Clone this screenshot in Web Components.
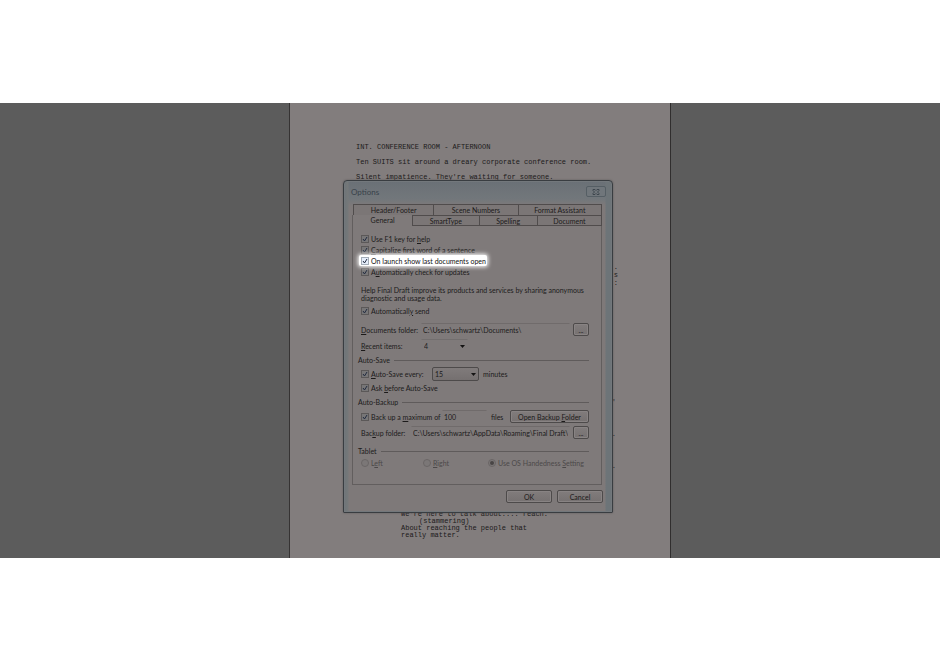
<!DOCTYPE html>
<html lang="en">
<head>
<meta charset="utf-8">
<title>Options</title>
<style>
  body {
    margin: 0;
    padding-top: 103px;
    background: #fff;
    color: #1c1a1a;
    font: 7px/8px Lato, "Liberation Sans", sans-serif;
  }
</style>
</head>
<body>
<draft-desk>
  <script-page>
    <script-line>INT. CONFERENCE ROOM - AFTERNOON</script-line>
    <script-line>Ten SUITS sit around a dreary corporate conference room.</script-line>
    <script-line>Silent impatience. They're waiting for someone.</script-line>
    <script-line slot="speech">We're here to talk about.... reach.</script-line>
    <script-line slot="speech" paren>(stammering)</script-line>
    <script-line slot="speech">About reaching the people that</script-line>
    <script-line slot="speech">really matter.</script-line>
  </script-page>
  <options-dialog slot="dialog"></options-dialog>
</draft-desk>

<script>
  // small helper, every element gets an open shadow root with its own markup
  class BaseElement extends HTMLElement {
    constructor() {
      super();
      this.attachShadow({ mode: 'open' });
    }
    render(html) {
      this.shadowRoot.innerHTML = html;
    }
  }

  class DraftDesk extends BaseElement {
    connectedCallback() {
      this.render(`
        <style>
          :host {
            display: grid;
            grid-template-columns: 289fr 382fr 269fr;
            background: #5c5c5c;
          }
          .paper {
            grid-column: 2;
            position: relative;
            background: #827d7d;
            border-left: 1px solid #353333;
            border-right: 1px solid #302e2e;
          }
          /* the dialog floats over the page */
          .float {
            position: absolute;
            top: 77px;
            left: 53px;
            right: 57px;
          }
        </style>
        <div class="paper">
          <slot></slot>
          <div class="float"><slot name="dialog"></slot></div>
        </div>
      `);
    }
  }

  class ScriptPage extends BaseElement {
    connectedCallback() {
      this.render(`
        <style>
          :host {
            display: block;
            padding: 40px 52px 19px 66px;
            font: 7px/8px "Liberation Mono", "Courier New", monospace;
          }
          .action {
            display: flex;
            flex-direction: column;
            gap: 7px;
          }
          /* line ends that stick out to the right of the dialog */
          .edge {
            display: flex;
            flex-direction: column;
            align-items: flex-end;
            margin-top: 82px;
          }
          .edge.sparse {
            gap: 24px;
            margin: 111px 2px 41px 0;
          }
          .speech {
            padding-left: 45px;
            line-height: 7px;
          }
        </style>
        <div class="action"><slot></slot></div>
        <div class="edge"><span>.</span><span>s</span><span>:</span></div>
        <div class="edge sparse"><span>'</span><span>.</span><span>.</span></div>
        <div class="speech"><slot name="speech"></slot></div>
      `);
    }
  }

  class ScriptLine extends BaseElement {
    connectedCallback() {
      this.render(`
        <style>
          :host { display: block; white-space: nowrap; }
          :host([paren]) { padding-left: 18px; }
        </style>
        <slot></slot>
      `);
    }
  }

  class CheckOption extends BaseElement {
    connectedCallback() {
      const type = this.getAttribute('type') || 'checkbox';
      this.render(`
        <style>
          :host { display: flex; }
          label {
            display: flex;
            align-items: center;
            gap: 2px;
            height: 11px;
            white-space: nowrap;
          }
          .box { position: relative; display: flex; }
          input {
            appearance: none;
            box-sizing: border-box;
            width: 8px;
            height: 8px;
            margin: 0;
            border: 1px solid #5b5858;
            background: #777677;
          }
          input[type=radio] { border-radius: 50%; border-color: #6a6666; background: #7b7777; }
          svg { position: absolute; inset: 0; width: 8px; height: 8px; pointer-events: none; display: none; }
          input:checked + svg { display: block; }
          :host([disabled]) { color: #4c4949; }
          /* spotlight over the row the tip talks about */
          :host([spotlight]) label {
            color: #111;
            background: #fff;
            border-radius: 2px;
            margin: 0 0 0 -2px;
            padding: 0 1px 0 2px;
            box-shadow: 0 0 4px 1px #fff;
            position: relative;
            z-index: 1;
          }
          :host([spotlight]) input { border-color: #a3adb8; background: #e6eefb; }
        </style>
        <label>
          <span class="box">
            <input type="${type}" name="${this.getAttribute('name') || ''}"
              ${this.hasAttribute('checked') ? 'checked' : ''}
              ${this.hasAttribute('disabled') ? 'disabled' : ''}>
            ${type === 'radio'
              ? '<svg viewBox="0 0 8 8"><circle cx="4" cy="4" r="2" fill="#484545"/></svg>'
              : '<svg viewBox="0 0 8 8"><path d="M2 4l1.5 2L6 2" fill="none" stroke="#222b40"/></svg>'}
          </span>
          <span><slot></slot></span>
        </label>
      `);
    }
  }

  class GroupTitle extends BaseElement {
    connectedCallback() {
      this.render(`
        <style>
          :host { display: flex; align-items: center; gap: 4px; height: 8px; }
          i { flex: 1; height: 1px; background: #5f5b5b; }
        </style>
        <slot></slot><i></i>
      `);
    }
  }

  class PushButton extends BaseElement {
    connectedCallback() {
      this.render(`
        <style>
          :host { display: flex; }
          button {
            flex: 1;
            box-sizing: border-box;
            height: 13px;
            padding: 0;
            border: 1px solid #4d4a4a;
            border-radius: 2px;
            background: linear-gradient(#817c7c, #767171);
            box-shadow: inset 0 0 0 1px #888383;
            color: inherit;
            font: inherit;
            white-space: nowrap;
          }
        </style>
        <button type="button"><slot></slot></button>
      `);
    }
  }

  // the slotted text becomes the label, or pass label="" when there is none to show
  class DropDown extends BaseElement {
    connectedCallback() {
      const label = this.getAttribute('label');
      this.render(`
        <style>
          :host { display: flex; align-items: center; }
          label { width: 60px; white-space: nowrap; }
          .field { position: relative; display: flex; width: 47px; }
          select {
            appearance: none;
            box-sizing: border-box;
            width: 100%;
            height: 13px;
            margin: 0;
            padding: 0 0 0 2px;
            border: 1px solid transparent;
            border-top-color: #726e6e;
            border-radius: 0;
            background: transparent;
            color: inherit;
            font: inherit;
          }
          :host([raised]) select {
            height: 14px;
            border: 1px solid #4d4a4a;
            border-radius: 2px;
            background: linear-gradient(#807b7b, #757070);
          }
          svg { position: absolute; right: 3px; top: 6px; width: 5px; height: 3px; pointer-events: none; }
        </style>
        ${label ? '' : '<label for="list"><slot></slot></label>'}
        <div class="field">
          <select id="list" ${label ? `aria-label="${label}"` : ''}>
            <option>${this.getAttribute('value')}</option>
          </select>
          <svg viewBox="0 0 5 3"><path d="M0 0h5L2.5 3z" fill="#141313"/></svg>
        </div>
      `);
    }
  }

  class OptionsDialog extends BaseElement {
    connectedCallback() {
      this.render(`
        <style>
          :host {
            display: block;
            box-sizing: border-box;
            padding: 0 10px 9px 8px;
            border: 1px solid #393d41;
            border-radius: 4px 4px 1px 1px;
            background: linear-gradient(90deg, #6d7478 0, #757879 4px, transparent 5px, transparent calc(100% - 7px), #6d7478 calc(100% - 6px)),
              linear-gradient(#6a7076, #72777b 18px, #7e7979 25px);
            box-shadow: inset 0 0 0 1px #73787c, 0 0 2px #5e5a5a;
          }
          header {
            display: flex;
            align-items: center;
            justify-content: space-between;
            height: 21px;
            margin: 0 -4px 2px -1px;
            color: #38424a;
          }
          h1 { margin: 0; font: inherit; font-size: 8px; }
          .close {
            display: flex;
            align-items: center;
            justify-content: center;
            box-sizing: border-box;
            width: 20px;
            height: 11px;
            padding: 0;
            border: 1px solid #555e64;
            border-radius: 2px;
            background: #70767b;
          }
          .close svg { width: 8px; height: 6px; }
          nav { display: grid; }
          nav.back { grid-template-columns: 80fr 84fr 84fr; margin-left: 1px; }
          nav.front { grid-template-columns: 60fr 66fr 58fr 65fr; }
          nav button {
            height: 11px;
            box-sizing: border-box;
            margin: 0;
            padding: 0;
            border: 1px solid #504c4c;
            border-width: 1px 0 0 1px;
            background: #7b7676;
            color: inherit;
            font: inherit;
          }
          nav button:last-child { border-right-width: 1px; }
          nav.front button { border-bottom-width: 1px; }
          nav.front .active { padding-bottom: 2px; border-bottom: 0; border-top: 0; border-color: #625e5e; background: #7f7a7a; }
          .panel {
            padding: 7px 12px 16px 8px;
            border: 1px solid #625e5e;
            border-top: 0;
            background: #7f7a7a;
          }
          p { margin: 9px 0 3px; white-space: nowrap; }
          .row { display: flex; align-items: center; }
          .row label { white-space: nowrap; }
          input {
            box-sizing: border-box;
            flex: 1;
            min-width: 0;
            height: 13px;
            padding: 0 1px;
            border: 1px solid transparent;
            border-top-color: #706b6b;
            background: transparent;
            color: inherit;
            font: inherit;
          }
          group-title { margin-left: -3px; }
          .docs { height: 15px; margin-top: 6px; }
          .docs label { width: 60px; }
          .recent { height: 13px; margin: 2px 0 4px; }
          .save { height: 15px; margin: 2px 0 1px; }
          .save check-option { width: 71px; }
          .save drop-down { margin-right: 4px; }
          .backup-title { margin-top: 5px; }
          .backup { height: 15px; margin-top: 3px; }
          .backup check-option { width: 81px; }
          .backup input { flex: 0 0 45px; }
          .backup span { margin: 0 auto 0 4px; }
          .backup push-button { width: 79px; }
          .folder { height: 13px; margin: 2px 0 8px; }
          .folder label { width: 50px; }
          .browse { width: 16px; margin-left: 3px; }
          .hands { margin-top: 2px; display: grid; grid-template-columns: 62px 65px auto; }
          footer { display: flex; justify-content: flex-end; gap: 5px; margin: 5px -1px 0 0; }
          footer push-button { width: 46px; }
        </style>
        <header>
          <h1>Options</h1>
          <button class="close" aria-label="Close">
            <svg viewBox="0 0 8 6"><path d="M1 .5h2l1 1 1-1h2v1L5.500 3 7 4.500v1H5l-1-1-1 1H1v-1L2.500 3 1 1.500z" fill="none" stroke="#3d464d"/></svg>
          </button>
        </header>
        <nav class="back">
          <button>Header/Footer</button><button>Scene Numbers</button><button>Format Assistant</button>
        </nav>
        <nav class="front">
          <button class="active">General</button><button>SmartType</button><button>Spelling</button><button>Document</button>
        </nav>
        <div class="panel">
          <check-option checked>Use F1 key for <u>h</u>elp</check-option>
          <check-option checked><u>C</u>apitalize first word of a sentence</check-option>
          <check-option checked spotlight>On launch show last documents open</check-option>
          <check-option checked>A<u>u</u>tomatically check for updates</check-option>
          <p>Help Final Draft improve its products and services by sharing anonymous<br>diagnostic and usage data.</p>
          <check-option checked>Automaticall<u>y</u> send</check-option>
          <div class="row docs">
            <label for="docs"><u>D</u>ocuments folder:</label>
            <input id="docs" value="C:\\Users\\schwartz\\Documents\\">
            <push-button class="browse">...</push-button>
          </div>
          <drop-down class="recent" value="4"><u>R</u>ecent items:</drop-down>
          <group-title>Auto-Save</group-title>
          <div class="row save">
            <check-option checked><u>A</u>uto-Save every:</check-option>
            <drop-down raised label="Auto-Save minutes" value="15"></drop-down>
            <span>minutes</span>
          </div>
          <check-option checked>Ask <u>b</u>efore Auto-Save</check-option>
          <group-title class="backup-title">Auto-Backup</group-title>
          <div class="row backup">
            <check-option checked>Back up a <u>m</u>aximum of</check-option>
            <input aria-label="Maximum backup files" value="100">
            <span>files</span>
            <push-button>Open Backup <u>F</u>older</push-button>
          </div>
          <div class="row folder">
            <label for="folder">Bac<u>k</u>up folder:</label>
            <input id="folder" value="C:\\Users\\schwartz\\AppData\\Roaming\\Final Draft\\Fi">
            <push-button class="browse">...</push-button>
          </div>
          <group-title>Tablet</group-title>
          <div class="hands">
            <check-option type="radio" name="hand" disabled>L<u>e</u>ft</check-option>
            <check-option type="radio" name="hand" disabled><u>R</u>ight</check-option>
            <check-option type="radio" name="hand" disabled checked>Use OS Handedness <u>S</u>etting</check-option>
          </div>
        </div>
        <footer>
          <push-button>OK</push-button>
          <push-button>Cancel</push-button>
        </footer>
      `);
    }
  }

  customElements.define('draft-desk', DraftDesk);
  customElements.define('script-page', ScriptPage);
  customElements.define('script-line', ScriptLine);
  customElements.define('check-option', CheckOption);
  customElements.define('group-title', GroupTitle);
  customElements.define('push-button', PushButton);
  customElements.define('drop-down', DropDown);
  customElements.define('options-dialog', OptionsDialog);
</script>
</body>
</html>
